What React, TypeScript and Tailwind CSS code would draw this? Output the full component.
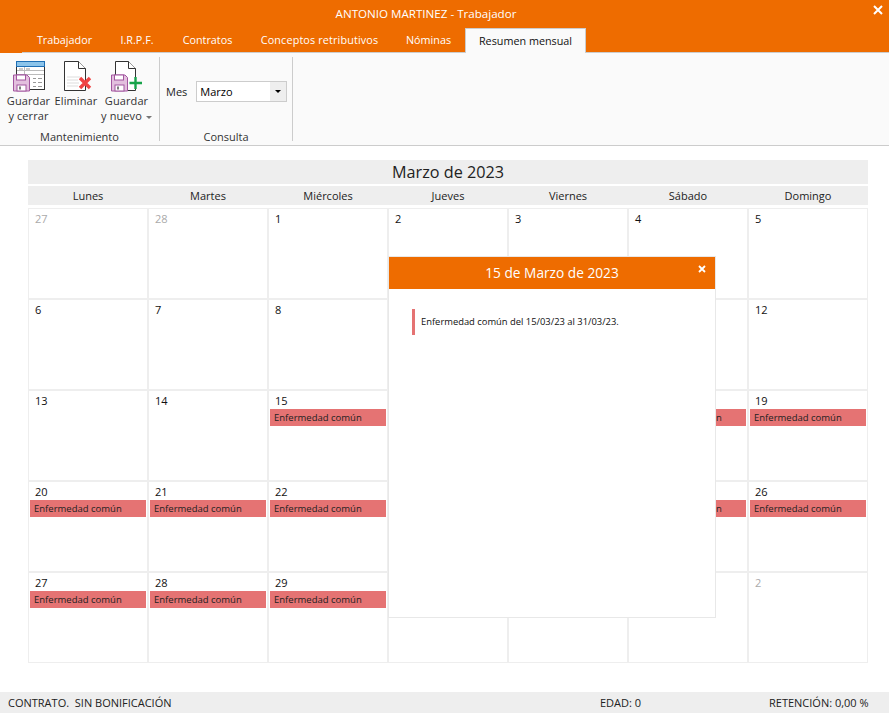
const tabs = [
  { label: 'Trabajador', width: 'w-[83px]' },
  { label: 'I.R.P.F.', width: 'w-[62px]' },
  { label: 'Contratos', width: 'w-[79px]' },
  { label: 'Conceptos retributivos', width: 'w-[145px] tracking-[0.14px]' },
  { label: 'Nóminas', width: 'w-[73px]' },
];
const days = ['Lunes', 'Martes', 'Miércoles', 'Jueves', 'Viernes', 'Sábado', 'Domingo'];

// [day number, other month, has bar]
const cells: [number, boolean, boolean][] = [
  [27, true, false], [28, true, false], [1, false, false], [2, false, false], [3, false, false], [4, false, false], [5, false, false],
  [6, false, false], [7, false, false], [8, false, false], [9, false, false], [10, false, false], [11, false, false], [12, false, false],
  [13, false, false], [14, false, false], [15, false, true], [16, false, true], [17, false, true], [18, false, true], [19, false, true],
  [20, false, true], [21, false, true], [22, false, true], [23, false, true], [24, false, true], [25, false, true], [26, false, true],
  [27, false, true], [28, false, true], [29, false, true], [30, false, true], [31, false, true], [1, true, false], [2, true, false],
];

function Disk() {
  return (
    <g>
      <path d="M0.5 0.5H14L16.5 3V16.5H0.5Z" fill="#e3c0de" stroke="#a2569f" />
      <rect x="3.5" y="0.5" width="9" height="5" fill="#fff" stroke="#a2569f" />
      <rect x="4" y="10.5" width="9" height="6" fill="#fff" stroke="#a2569f" />
      <rect x="6" y="12" width="2" height="3" fill="#7d7d7d" />
    </g>
  );
}

function SaveCloseIcon() {
  return (
    <svg width="32" height="32" viewBox="0 0 32 32">
      <rect x="3.5" y="1.5" width="28" height="28" fill="#fff" stroke="#333" />
      <rect x="3.5" y="1.5" width="28" height="5" fill="#8cc4ea" stroke="#1f6fb5" />
      <path d="M4 10.5H31M4 14.5H31M11.5 7V14" stroke="#bbb" fill="none" />
      <path d="M6 9h4M13 9h4M20 18.5h3M25 18.5h4M20 22.5h3M25 22.5h4M20 26.5h3M25 26.5h4" stroke="#999" fill="none" />
      <g transform="translate(0 14.5)"><Disk /></g>
    </svg>
  );
}

function DeleteIcon() {
  return (
    <svg width="32" height="32" viewBox="0 0 32 32">
      <path d="M4.5 1.5H18.5L25.5 8.5V30.5H4.5Z" fill="#fff" stroke="#333" />
      <path d="M18.5 1.5V8.5H25.5" fill="#fff" stroke="#333" />
      <path d="M7 17h13M7 20h11M7 23h12M7 26h11" stroke="#ddd" fill="none" />
      <path d="M20 18L30 28M30 18L20 28" stroke="#ef4444" strokeWidth="3.4" fill="none" />
    </svg>
  );
}

function SaveNewIcon() {
  return (
    <svg width="32" height="32" viewBox="0 0 32 32">
      <path d="M4.5 1.5H17.5L24.5 8.5V30.5H4.5Z" fill="#fff" stroke="#333" />
      <path d="M17.5 1.5V8.5H24.5" fill="#fff" stroke="#333" />
      <g transform="translate(0 14.5)"><Disk /></g>
      <path d="M24.5 17V29M18.5 23H31" stroke="#16a34a" strokeWidth="2.4" fill="none" />
    </svg>
  );
}

function ToolButton({ icon, lines, width, caret }: { icon: React.ReactNode; lines: string[]; width: string; caret?: boolean }) {
  return (
    <div className={`flex flex-col items-center ${width}`}>
      <div className="h-[32px]">{icon}</div>
      <div className="text-center leading-[15px] mt-[1px] text-[#333] whitespace-nowrap tracking-[0.1px]">
        {lines.map((line, i) => (
          <div key={line}>
            {line}
            {caret && i === 1 && <span className="inline-block align-middle ml-[4px] border-x-[3px] border-t-[3px] border-x-transparent border-t-[#777]" />}
          </div>
        ))}
      </div>
    </div>
  );
}

export default function App() {
  return (
    <div className="relative w-[889px] h-[713px] bg-white overflow-hidden flex flex-col text-[11px] text-black font-['Open_Sans','Noto_Sans',sans-serif]">
      <header className="h-[53px] bg-[#ee6c00] relative shrink-0">
        <div className="h-[28px] flex items-center justify-center pr-[37px] text-[11.6px] text-white">ANTONIO MARTINEZ - Trabajador</div>
        <svg className="absolute top-[5px] right-[6px]" width="10" height="10" viewBox="0 0 10 10">
          <path d="M1 1L9 9M9 1L1 9" stroke="#fff" strokeWidth="2" fill="none" />
        </svg>
        <div className="absolute left-[22px] right-0 bottom-0 h-px bg-[#ccc]" />
        <nav className="relative flex pl-[23px] h-[25px] text-[10.8px]">
          {tabs.map((t) => (
            <div key={t.label} className={`${t.width} h-[24px] flex items-center justify-center text-white`}>{t.label}</div>
          ))}
          <div className="w-[121px] h-[25px] flex items-center justify-center bg-[#fafafa] border border-b-0 border-[#ccc] text-[#111]">Resumen mensual</div>
        </nav>
      </header>

      <section className="h-[93px] shrink-0 bg-[#fafafa] border-b border-[#ccc] flex pt-[4px]">
        <div className="w-[160px] h-[84px] border-r border-[#ccc]">
          <div className="flex h-[72px] pt-[3px] pl-[6px]">
            <ToolButton icon={<SaveCloseIcon />} lines={['Guardar', 'y cerrar']} width="w-[45px]" />
            <ToolButton icon={<DeleteIcon />} lines={['Eliminar']} width="w-[50px]" />
            <ToolButton icon={<SaveNewIcon />} lines={['Guardar', 'y nuevo']} width="w-[51px]" caret />
          </div>
          <div className="h-[12px] leading-[16px] text-center text-[#333]">Mantenimiento</div>
        </div>
        <div className="w-[133px] h-[84px] border-r border-[#ccc]">
          <div className="h-[72px] flex items-center pl-[6px] pb-[3px] gap-[9px]">
            <span className="pt-px text-[#222]">Mes</span>
            <div className="w-[91px] h-[21px] bg-white border border-[#ccc] flex items-center justify-between pl-[3px]">
              <span className="pt-px">Marzo</span>
              <span className="w-[16px] h-[19px] bg-[#eee] flex items-center justify-center">
                <span className="border-x-[3px] border-t-[3px] border-x-transparent border-t-black" />
              </span>
            </div>
          </div>
          <div className="h-[12px] leading-[16px] text-center text-[#333]">Consulta</div>
        </div>
      </section>

      <main className="flex-1 pl-[28px] pr-[21px] pt-[14px]">
        <div className="h-[24px] bg-[#eee] flex items-center justify-center text-[16.2px] text-[#222]">Marzo de 2023</div>
        <div className="mt-[2px] h-[19px] pt-px bg-[#eee] grid grid-cols-7">
          {days.map((d) => (
            <div key={d} className="flex items-center justify-center text-[#222]">{d}</div>
          ))}
        </div>
        <div className="mt-[3px] grid grid-cols-7 auto-rows-[91px]">
          {cells.map(([n, other, bar], i) => (
            <div key={i} className="border border-[#eee] p-px">
              <div className={`pl-[5px] h-[17px] leading-[17px] ${other ? 'text-[#aaa]' : 'text-[#111]'}`}>{n}</div>
              {bar && <div className="h-[17px] bg-[#e57373] pl-[4px] leading-[17px] text-[9.5px] text-[#222]">Enfermedad común</div>}
            </div>
          ))}
        </div>
      </main>

      <footer className="h-[21px] shrink-0 bg-[#eee] flex items-center pl-[8px] pt-px text-[#222]">
        <span className="w-[592px] whitespace-pre">CONTRATO.  SIN BONIFICACIÓN</span>
        <span className="w-[169px]">EDAD: 0</span>
        <span>RETENCIÓN: 0,00 %</span>
      </footer>

      <div className="absolute left-[388px] top-[256px] w-[328px] h-[362px] bg-white border border-[#e8e8e8]">
        <div className="h-[32px] bg-[#ee6c00] flex items-center justify-center text-white text-[13.7px] relative">
          15 de Marzo de 2023
          <svg className="absolute top-[8px] right-[9px]" width="8" height="8" viewBox="0 0 8 8">
            <path d="M1 1L7 7M7 1L1 7" stroke="#fff" strokeWidth="1.8" fill="none" />
          </svg>
        </div>
        <div className="mt-[20px] ml-[23px] h-[26px] border-l-[3px] border-[#e57373] pl-[6px] pt-px flex items-center text-[9.4px] text-[#111]">
          Enfermedad común del 15/03/23 al 31/03/23.
        </div>
      </div>
    </div>
  );
}
